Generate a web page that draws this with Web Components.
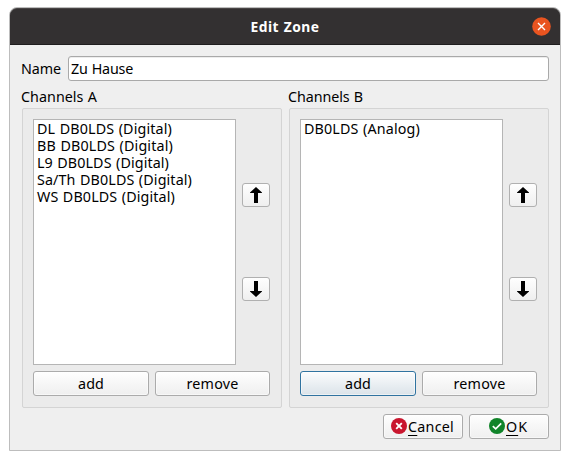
<!DOCTYPE html>
<html lang="de"><head><meta charset="utf-8"><title>Edit Zone</title>
<style>
html,body{margin:0;background:#fff}
body{width:570px;height:460px;overflow:hidden;box-sizing:border-box;padding:7px 9px 9px;font:14.3px/17px "Noto Sans","Open Sans",sans-serif;word-spacing:.6px;color:#000}
</style></head><body>
<edit-dialog heading="Edit Zone"></edit-dialog>
<script>
const define=(name,html,init)=>customElements.define(name,class extends HTMLElement{
  connectedCallback(){
    if(this.shadowRoot)return;
    const t=document.createElement('template');t.innerHTML=html;
    this.attachShadow({mode:'open'}).append(t.content.cloneNode(true));
    if(init)init(this,this.shadowRoot);
  }
});

/* Single line of text, tracked so that its advance equals the w attribute. */
define('ui-text',`<style>:host{display:block;white-space:pre;height:17px;line-height:17px;flex:none}
span{display:inline-block;line-height:17px;vertical-align:top}::slotted(u){text-decoration-thickness:1px;text-underline-offset:3px}</style><span><slot></slot></span>`,(el,root)=>{
  const s=root.querySelector('span'),w=+el.getAttribute('w'),n=el.textContent.length;
  const natural=s.getBoundingClientRect().width;
  s.style.letterSpacing=((w-natural)/n)+'px';
  el.style.width=w+'px';
});

define('title-bar',`<style>
:host{display:grid;grid-template-columns:1fr auto 1fr;align-items:center;height:37px;box-sizing:border-box;background:#333031;border-top:1px solid #484545;border-bottom:1px solid #1f1d1e;border-radius:7px 7px 0 0;color:#fff;font-weight:700;font-size:13.8px;padding:0 9px}
svg{justify-self:end;display:block}ui-text{grid-column:2}
</style><ui-text w="69">Edit Zone</ui-text>
<svg width="19" height="19" viewBox="0 0 19 19"><circle cx="9.5" cy="9.5" r="9.3" fill="#e95420"/><path d="M6 6l7 7M13 6l-7 7" stroke="#fff" stroke-width="1.4"/></svg>`);

define('text-field',`<style>
:host{display:block;flex:1;height:25px;box-sizing:border-box;border:1px solid #a9a9a9;border-radius:3px;background:#fff;padding:3px 2px;box-shadow:inset 0 1px #ededed}
</style><slot></slot>`);

define('push-button',`<style>
:host{display:flex;align-items:center;justify-content:center;height:25px;box-sizing:border-box;border:1px solid #ababab;border-radius:3px;background:linear-gradient(#fefefe,#efefef);box-shadow:inset 0 0 0 1px #ffffff80;padding-bottom:1px}
:host([focused]){border-color:#3073a0;background:linear-gradient(#fbfcfd,#dbe3e9)}
</style><slot></slot>`);

define('arrow-button',`<style>
:host{display:flex;align-items:center;justify-content:center;width:28px;height:24px;box-sizing:border-box;border:1px solid #b0b0b0;border-radius:3px;background:linear-gradient(#fefefe,#efefef)}
:host([down]) svg{transform:scaleY(-1)}
</style><svg width="12" height="16" viewBox="0 0 12 16"><path d="M6 0L12 5.4V6H8V16H4V6H0V5.4Z"/></svg>`);

define('list-box',`<style>
:host{display:block;box-sizing:border-box;border:1px solid #b5b5b5;background:#fff;padding:0 3px}
</style><slot></slot>`);

define('channel-group',`<style>
:host{display:grid;grid-template-columns:203px 28px;grid-template-rows:246px 25px;gap:6px;width:260px;height:300px;box-sizing:border-box;border:1px solid #d4d4d4;border-radius:2px;background:#ebebeb;padding:10px}
.arrows{display:flex;flex-direction:column;gap:70px;padding-top:64px}
.actions{grid-column:1/3;display:grid;grid-template-columns:116px 1fr;gap:6px}
</style><list-box><slot></slot></list-box>
<div class="arrows"><arrow-button></arrow-button><arrow-button down></arrow-button></div>
<div class="actions"><push-button id="add"><ui-text w="26">add</ui-text></push-button><push-button><ui-text w="52">remove</ui-text></push-button></div>`,(el,root)=>{
  root.querySelector('#add').toggleAttribute('focused',el.hasAttribute('add-focused'));
});

define('edit-dialog',`<style>
:host{display:block;box-sizing:border-box;width:552px;height:444px;border:1px solid #bdbdbd;border-radius:8px 8px 0 0;background:#efefef}
.body{padding:11px 11px 0 12px}
.name{display:flex;align-items:center}
.name>ui-text{margin:-1px 7px 0 -1px}
.groups{display:grid;grid-template-columns:260px 260px;column-gap:7px;row-gap:3px;padding-top:7px}
.groups>ui-text{margin-left:-1px}
.footer{display:grid;grid-template-columns:80px 80px;gap:6px;justify-content:end;padding-top:6px}
svg{flex:none;margin:0 1px 0 -1px}
</style>
<title-bar></title-bar>
<div class="body">
<div class="name"><ui-text w="40">Name</ui-text><text-field><ui-text w="62">Zu Hause</ui-text></text-field></div>
<div class="groups"><ui-text w="76">Channels A</ui-text><ui-text w="75">Channels B</ui-text>
<channel-group><ui-text w="135">DL DB0LDS (Digital)</ui-text><ui-text w="136">BB DB0LDS (Digital)</ui-text><ui-text w="132">L9 DB0LDS (Digital)</ui-text><ui-text w="155">Sa/Th DB0LDS (Digital)</ui-text><ui-text w="138">WS DB0LDS (Digital)</ui-text></channel-group>
<channel-group add-focused><ui-text w="116">DB0LDS (Analog)</ui-text></channel-group></div>
<div class="footer">
<push-button><svg width="16" height="16" viewBox="0 0 16 16"><circle cx="8" cy="8" r="8" fill="#c9162e"/><path d="M5.2 5.2l5.6 5.6M10.8 5.2l-5.6 5.6" stroke="#fff" stroke-width="1.9"/></svg><ui-text w="46"><u>C</u>ancel</ui-text></push-button>
<push-button><svg width="16" height="16" viewBox="0 0 16 16"><circle cx="8" cy="8" r="8" fill="#11842a"/><path d="M3.8 8.2l2.9 2.7 5.5-5.5" fill="none" stroke="#fff" stroke-width="1.7"/></svg><ui-text w="22"><u>O</u>K</ui-text></push-button>
</div></div>`);
</script></body></html>
